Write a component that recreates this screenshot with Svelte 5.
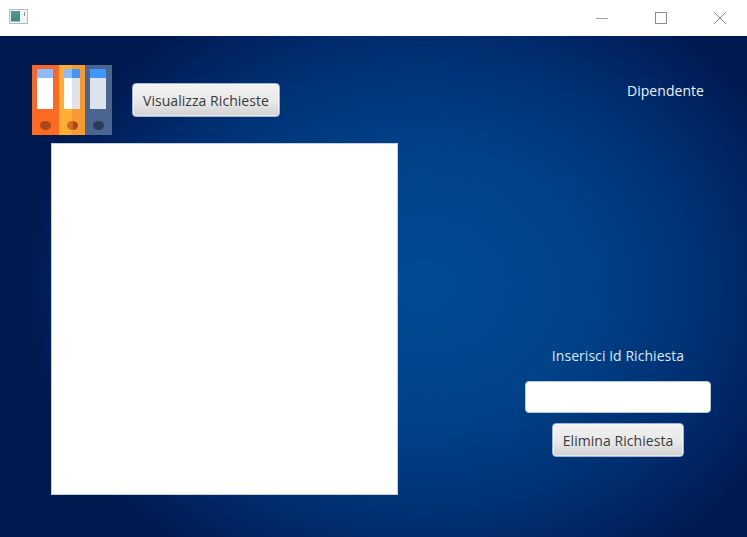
<script>
  const binders = [
    { name: 'orange', body: 'linear-gradient(160deg, #f4682a, #ff6a1f)', tab: '#8cbcfb', label: '#ffffff', hole: '#a8481f' },
    { name: 'yellow', body: 'linear-gradient(90deg, #ffae33 50%, #f79a30 50%)', tab: 'linear-gradient(90deg, #8cbcfb 50%, #3f96fb 50%)', label: 'linear-gradient(90deg, #ffffff 50%, #dde3ec 50%)', hole: 'linear-gradient(90deg, #d4691f 50%, #a8481f 50%)' },
    { name: 'navy', body: '#4a6690', tab: '#3f96fb', label: '#dde3ec', hole: '#2a3a58' }
  ];
</script>

<div class="window">
  <header class="titlebar">
    <svg class="appicon" width="20" height="16" viewBox="0 0 20 16" aria-hidden="true">
      <defs>
        <linearGradient id="appicon-fill" x1="0" y1="0" x2="0" y2="1">
          <stop offset="0" stop-color="#4f9a9a" />
          <stop offset="1" stop-color="#3d8a72" />
        </linearGradient>
      </defs>
      <rect x="0.5" y="0.5" width="18" height="14" fill="#f1f4f4" stroke="#b4bcbc" />
      <rect x="2" y="2" width="9" height="10.5" fill="url(#appicon-fill)" />
      <rect x="15" y="3" width="1" height="4" fill="#7f9a96" />
    </svg>
    <div class="controls">
      <svg width="14" height="14" viewBox="0 0 14 14" aria-hidden="true"><path d="M1 7.5H13" stroke="#a0a0a0" /></svg>
      <svg width="14" height="14" viewBox="0 0 14 14" aria-hidden="true"><rect x="1.5" y="1.5" width="11" height="11" fill="none" stroke="#8c8c8c" /></svg>
      <svg width="14" height="14" viewBox="0 0 14 14" aria-hidden="true"><path d="M1 1L13 13M13 1L1 13" stroke="#8c8c8c" /></svg>
    </div>
  </header>

  <main class="content">
    <section class="left">
      <div class="toolbar">
        <div class="binders" aria-hidden="true">
          {#each binders as b}
            <div class="binder" style="background:{b.body}">
              <span class="tab" style="background:{b.tab}"></span>
              <span class="label" style="background:{b.label}"></span>
              <span class="hole" style="background:{b.hole}"></span>
            </div>
          {/each}
        </div>
        <button class="fx">Visualizza Richieste</button>
      </div>
      <div class="list"></div>
    </section>

    <section class="right">
      <p class="role">Dipendente</p>
      <div class="form">
        <label for="req">Inserisci Id Richiesta</label>
        <input id="req" type="text" />
        <button class="fx">Elimina Richiesta</button>
      </div>
    </section>
  </main>
</div>

<style>
  :global(body) {
    margin: 0;
    background: #00205c;
  }
  .window {
    width: 747px;
    height: 537px;
    display: flex;
    flex-direction: column;
    overflow: hidden;
    font-family: "Open Sans", "Noto Sans", sans-serif;
    font-size: 14px;
    letter-spacing: 0.05px;
  }
  .titlebar {
    height: 36px;
    flex: none;
    background: #fff;
    display: flex;
    align-items: center;
    justify-content: space-between;
    padding: 0 20px 0 9px;
    box-sizing: border-box;
  }
  .appicon {
    margin-top: -2px;
  }
  .controls {
    display: flex;
    gap: 45px;
  }
  .controls svg {
    display: block;
  }
  .content {
    flex: 1;
    display: grid;
    grid-template-columns: 398px 1fr;
    background:
      radial-gradient(ellipse 400px 330px at 425px 250px, #004b95 0%, #004288 40%, #002f72 72%, #00215e 90%, #001a50 100%),
      #001a50;
  }
  .left {
    padding-top: 29px;
  }
  .toolbar {
    display: flex;
    align-items: center;
    gap: 20px;
    padding-left: 32px;
  }
  .binders {
    display: flex;
    width: 80px;
    height: 70px;
  }
  .binder {
    position: relative;
    flex: 1;
  }
  .binder:nth-child(2) {
    flex: 0 0 26px;
  }
  .tab,
  .label,
  .hole {
    position: absolute;
    left: 5px;
    width: 16px;
  }
  .tab {
    top: 4px;
    height: 9px;
  }
  .label {
    top: 13px;
    height: 31px;
  }
  .hole {
    top: 56px;
    left: 8px;
    width: 11px;
    height: 9px;
    border-radius: 50%;
  }
  .fx {
    width: 148px;
    height: 34px;
    padding: 0;
    font: inherit;
    letter-spacing: inherit;
    color: #3a3a3a;
    border: 1px solid #a0b4d0;
    border-radius: 4px;
    background: linear-gradient(#f2f2f2, #e8e8e8 55%, #d2d2d2);
    box-shadow: inset 0 0 0 1px rgba(255, 255, 255, 0.45);
  }
  .list {
    margin: 8px 0 0 51px;
    width: 347px;
    height: 352px;
    box-sizing: border-box;
    background: #fff;
    border: 1px solid #c3cedb;
  }
  .right {
    display: flex;
    flex-direction: column;
    justify-content: space-between;
    padding: 45px 43px 80px 127px;
  }
  .role {
    margin: 0 7px 0 0;
    align-self: flex-end;
    color: #eef3fb;
    line-height: 20px;
  }
  .form {
    display: flex;
    flex-direction: column;
    align-items: center;
    width: 186px;
  }
  .form label {
    color: #dde8f6;
    line-height: 20px;
  }
  .form input {
    box-sizing: border-box;
    width: 186px;
    height: 32px;
    margin-top: 15px;
    border: 1px solid #b6c6dc;
    border-radius: 4px;
    background: #fff;
    padding: 0;
  }
  .form .fx {
    width: 132px;
    margin-top: 10px;
  }
</style>
